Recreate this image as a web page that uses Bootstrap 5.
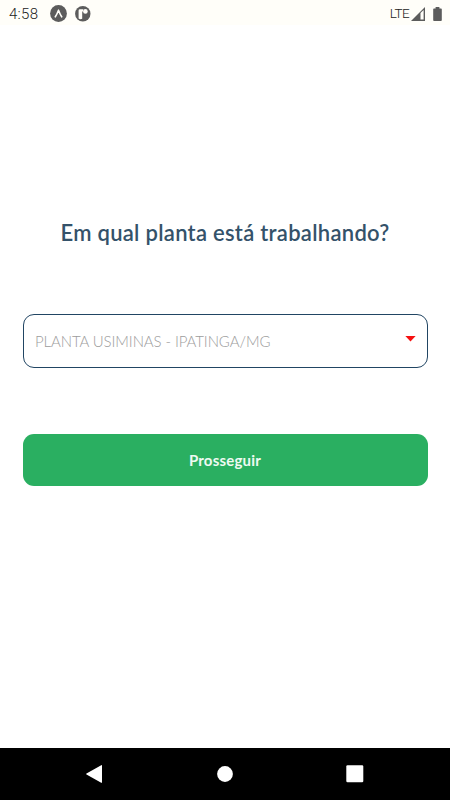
<!DOCTYPE html>
<html lang="pt-BR">
<head>
<meta charset="utf-8">
<meta name="viewport" content="width=device-width, initial-scale=1">
<title>Planta</title>
<link href="https://cdn.jsdelivr.net/npm/bootstrap@5.3.0/dist/css/bootstrap.min.css" rel="stylesheet">
<style>
body { font-family: Lato, sans-serif; }
.status-bar { height: 25px; background: #fffef9; color: #555; font-family: Roboto, sans-serif; padding: 2px 8px 0 9px; }
.clock { font-size: 15px; line-height: 23px; width: 41px; letter-spacing: .3px; font-weight: 300; padding-top: 1px; color: #222; }
.network { font-size: 13.5px; line-height: 23px; letter-spacing: -.6px; font-weight: 300; color: #222; margin-right: 2px; }
.content { padding: 193px 22.5px 0; }
.question { font-size: 22px; line-height: 30px; font-weight: 600; color: #34526a; letter-spacing: .28px; margin-bottom: 66px; }
.plant-select { height: 54px; border: 1px solid #214563; border-radius: 11px; color: #9c9c9c; font-size: 15px; padding: 0 11px 0 11.5px; margin-bottom: 66px; }
.plant-name { font-weight: 300; letter-spacing: -.1px; }
.proceed { height: 52px; background: #2aaf61; border: 0; border-radius: 11px; color: #eefaf2; font-size: 15px; font-weight: 700; letter-spacing: .2px; }
.system-nav { height: 52px; background: #000; padding: 0 85px 0 83px; }
</style>
<script src="https://cdn.jsdelivr.net/npm/bootstrap@5.3.0/dist/js/bootstrap.bundle.min.js"></script>
</head>
<body class="vh-100 d-flex flex-column bg-white overflow-hidden">
<header class="status-bar d-flex align-items-center flex-shrink-0">
  <span class="clock">4:58</span>
  <svg width="17" height="17" viewBox="0 0 17 17"><circle cx="8.5" cy="8.5" r="8.4" fill="#5c5c5c"/><path d="M5.3 11.8Q7 9.2 8.5 5.2Q10 9.2 11.7 11.8" fill="none" stroke="#fffef9" stroke-width="1.6" stroke-linecap="round" stroke-linejoin="round"/></svg>
  <svg class="ms-2" width="16" height="16" viewBox="0 0 16 16"><circle cx="7.8" cy="7.8" r="7.7" fill="#5c5c5c"/><path d="M3.6 12.6V4.6Q3.6 3.2 5 3.2H8.2V5.6H7.2V12.8Q5.4 13.6 3.6 12.6Z" fill="#fffef9"/><circle cx="10.4" cy="5.4" r="2.3" fill="#fffef9"/></svg>
  <span class="network ms-auto">LTE</span>
  <svg width="14" height="14" viewBox="0 0 14 14"><path d="M0 14L14 0V14Z" fill="#5c5c5c"/><path d="M9.5 6L12.6 2.9V12.6H9.5Z" fill="#fffef9"/></svg>
  <svg class="ms-2" width="9" height="14" viewBox="0 0 9 14"><path d="M2.6 0H6.4V1.5H8Q8.8 1.5 8.8 2.3V13.1Q8.8 14 8 14H1Q.2 14 .2 13.1V2.3Q.2 1.5 1 1.5H2.6Z" fill="#5c5c5c"/></svg>
</header>
<main class="content flex-grow-1 d-flex flex-column">
  <h1 class="question text-center text-nowrap">Em qual planta está trabalhando?</h1>
  <div class="plant-select d-flex align-items-center justify-content-between" role="combobox" tabindex="0">
    <span class="plant-name text-nowrap">PLANTA USIMINAS - IPATINGA/MG</span>
    <svg class="mb-1" width="11" height="6" viewBox="0 0 11 6"><path d="M.4 0H10.6L5.5 5.5Z" fill="#f61010"/></svg>
  </div>
  <button class="proceed w-100" type="button"><span class="proceed-label">Prosseguir</span></button>
</main>
<nav class="system-nav d-flex align-items-center justify-content-between flex-shrink-0">
  <svg width="20" height="20" viewBox="0 0 20 20"><path d="M18.2 1.2Q19 .9 19 1.7V18.3Q19 19.1 18.2 18.7L3.5 10.5Q2.6 10 3.5 9.5Z" fill="#fff"/></svg>
  <svg width="18" height="16" viewBox="0 0 18 16"><circle cx="10" cy="8" r="7.9" fill="#fff"/></svg>
  <svg width="20" height="20" viewBox="0 0 20 20"><rect x="1.3" y="1.3" width="17" height="17" rx="1.2" fill="#fff"/></svg>
</nav>
</body>
</html>
